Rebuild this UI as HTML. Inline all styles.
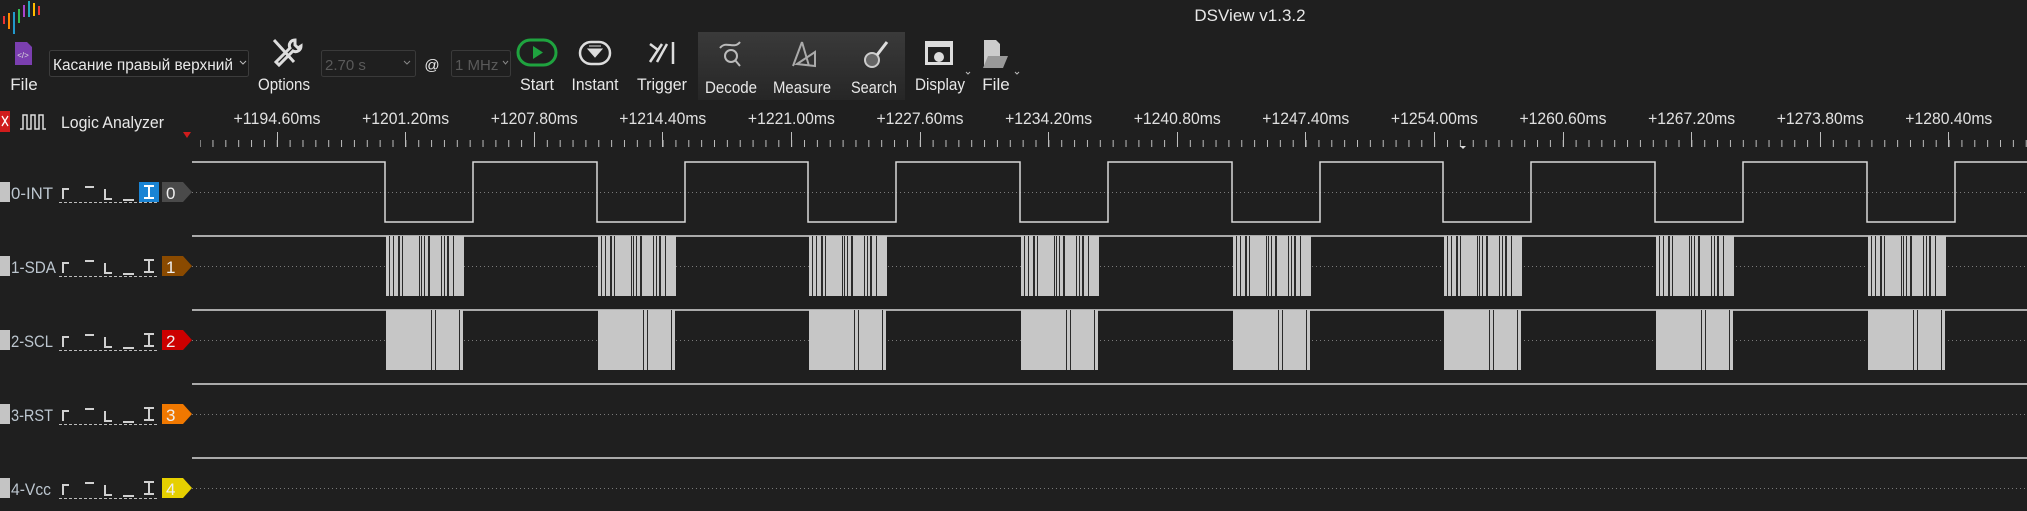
<!DOCTYPE html>
<html><head><meta charset="utf-8"><style>
html,body{margin:0;padding:0;background:#1f1f1f;width:2027px;height:511px;overflow:hidden}
svg{display:block}
text{font-family:"Liberation Sans Narrow","Liberation Sans",sans-serif}
</style></head><body>
<svg width="2027" height="511" viewBox="0 0 2027 511" xmlns="http://www.w3.org/2000/svg">
<defs>
<linearGradient id="grp" x1="0" y1="0" x2="0" y2="1"><stop offset="0" stop-color="#3a3a3a"/><stop offset="1" stop-color="#262626"/></linearGradient>
<pattern id="minor" x="6.7" y="0" width="12.86" height="20" patternUnits="userSpaceOnUse"><rect x="0" y="0" width="1" height="20" fill="#bdbdbd"/></pattern>
<pattern id="dots" x="0" y="0" width="4" height="2" patternUnits="userSpaceOnUse"><rect width="1" height="1" fill="#7a7a7a"/></pattern>
<g id="sda">
<rect x="1" y="0" width="78" height="60" fill="#c6c6c6"/>
<g fill="#2a2a2a"><rect x="4" y="0" width="1" height="60"/><rect x="8" y="0" width="1" height="60"/><rect x="13" y="0" width="2" height="60"/><rect x="17" y="0" width="1" height="60"/><rect x="34" y="0" width="1" height="60"/><rect x="36" y="0" width="1" height="60"/><rect x="39" y="0" width="1" height="60"/><rect x="43" y="0" width="2" height="60"/><rect x="56" y="0" width="1" height="60"/><rect x="59" y="0" width="1" height="60"/><rect x="62" y="0" width="2" height="60"/><rect x="68" y="0" width="1" height="60"/></g>
</g>
<g id="scl">
<rect x="1" y="0" width="77" height="60" fill="#c6c6c6"/>
<g fill="#2a2a2a"><rect x="46" y="0" width="1" height="60"/><rect x="50" y="0" width="1" height="60"/><rect x="74" y="0" width="1" height="60"/></g>
</g>
<g id="trg" stroke="#d0d0d0" stroke-width="2" fill="none">
<path d="M63 7V-3h6"/><path d="M85 -5h9"/><path d="M105 -3v10h7"/><path d="M123 8h11"/>
<path d="M59 10.5H159" stroke="#bbb" stroke-width="1" stroke-dasharray="3 2"/>
</g>
</defs>

<!-- title -->
<g>
<rect x="3" y="16" width="2" height="8" fill="#e33"/><rect x="8" y="13" width="2" height="16" fill="#f80"/><rect x="13" y="12" width="2" height="22" fill="#29c"/><rect x="18" y="9" width="2" height="14" fill="#3b5"/><rect x="23" y="5" width="2" height="12" fill="#a4c"/><rect x="28" y="1" width="2" height="16" fill="#2ab"/><rect x="33" y="3" width="2" height="13" fill="#fb0"/><rect x="38" y="6" width="2" height="9" fill="#e33"/>
</g>
<text x="1250" y="21" font-size="17" fill="#e8e8e8" text-anchor="middle">DSView v1.3.2</text>

<!-- toolbar -->
<rect x="698" y="32" width="207" height="68" fill="url(#grp)"/>
<g font-size="17" fill="#e8e8e8" text-anchor="middle">
<path d="M15 42h12l5 5v18H15z" fill="#7b3fb0"/><text x="23" y="58" font-size="8" fill="#ddd">&lt;/&gt;</text>
<text x="24" y="90">File</text>
<rect x="49.5" y="50.5" width="199" height="26" rx="2" fill="#1b1b1b" stroke="#3c3c3c"/>
<text x="53" y="70" text-anchor="start" font-family="Liberation Sans" font-size="15.5" textLength="180" lengthAdjust="spacingAndGlyphs">Касание правый верхний</text>
<path d="M240 61l3 3 3-3" stroke="#bbb" fill="none"/>
<path d="M274 40l20 22M295 40c-4 0-7 4-5 8l-14 14 3 3 14-14c4 2 8-1 8-5l-3 2-3-3z" stroke="#ddd" stroke-width="3" fill="none"/>
<text x="284" y="90" textLength="52" lengthAdjust="spacingAndGlyphs">Options</text>
<rect x="321.5" y="50.5" width="94" height="26" rx="2" fill="#1f1f1f" stroke="#3a3a3a"/>
<text x="325" y="70" text-anchor="start" fill="#5a5a5a" font-size="15">2.70 s</text>
<path d="M404 61l3 3 3-3" stroke="#888" fill="none"/>
<text x="432" y="70" font-size="15">@</text>
<rect x="451.5" y="50.5" width="59" height="26" rx="2" fill="#1f1f1f" stroke="#3a3a3a"/>
<text x="455" y="70" text-anchor="start" fill="#5a5a5a" font-size="15">1 MHz</text>
<path d="M503 61l2.5 3 2.5-3" stroke="#888" fill="none"/>
<rect x="518" y="40" width="38" height="25" rx="12.5" fill="none" stroke="#1fa33f" stroke-width="3"/>
<path d="M533 46v13l10-6.5z" fill="#1fa33f"/>
<text x="537" y="90" textLength="34" lengthAdjust="spacingAndGlyphs">Start</text>
<rect x="580" y="42" width="30" height="22" rx="11" fill="none" stroke="#ddd" stroke-width="2.5"/>
<path d="M588 49h14l-7 8z M589 46h12" fill="#ddd" stroke="#ddd"/>
<text x="595" y="90" textLength="47" lengthAdjust="spacingAndGlyphs">Instant</text>
<path d="M650 44l8 6M650 62l12-18M657 62l10-18M673 42v22" stroke="#ddd" stroke-width="2.5" fill="none"/>
<text x="662" y="90" textLength="50" lengthAdjust="spacingAndGlyphs">Trigger</text>
<circle cx="731" cy="56" r="6" fill="none" stroke="#bbb" stroke-width="2"/><path d="M735 60l5 6M720 48c6-8 14 2 20-6" stroke="#bbb" stroke-width="2" fill="none"/>
<text x="731" y="93" textLength="52" lengthAdjust="spacingAndGlyphs">Decode</text>
<path d="M802 42l-9 24M802 42l7 24M797 64l18-12v14z" stroke="#aaa" stroke-width="2" fill="none"/>
<text x="802" y="93" textLength="58" lengthAdjust="spacingAndGlyphs">Measure</text>
<circle cx="872" cy="60" r="7" fill="#666" stroke="#ccc" stroke-width="2"/><path d="M877 55l10-13" stroke="#ddd" stroke-width="3"/>
<text x="874" y="93" textLength="46" lengthAdjust="spacingAndGlyphs">Search</text>
<rect x="925" y="41" width="28" height="24" fill="#ddd"/><rect x="928" y="47" width="22" height="15" fill="#222"/><circle cx="939" cy="57" r="5" fill="#ddd"/>
<text x="940" y="90" textLength="50" lengthAdjust="spacingAndGlyphs">Display</text><path d="M966 72l2 2 2-2" stroke="#bbb" fill="none"/>
<path d="M984 40h12l4 4v22h-16z" fill="#ccc"/><path d="M988 56h20l-5 12h-20z" fill="#999"/>
<text x="996" y="90">File</text><path d="M1015 72l2 2 2-2" stroke="#bbb" fill="none"/>
</g>

<!-- ruler header -->
<rect x="0" y="111" width="10" height="21" fill="#d01c1c"/><path d="M2 116l6 10M8 116l-6 10" stroke="#fff" stroke-width="1.3"/>
<path d="M20 129h3v-14h4v14h4v-14h4v14h4v-14h4v14h3" stroke="#ddd" stroke-width="1.5" fill="none"/>
<text x="61" y="128" font-size="17" fill="#e8e8e8" textLength="103" lengthAdjust="spacingAndGlyphs">Logic Analyzer</text>
<path d="M183 132h8l-4 6z" fill="#d01c1c"/>
<g font-size="17" fill="#e0e0e0" text-anchor="middle" textLength="87" lengthAdjust="spacingAndGlyphs">
<text x="277" y="124" textLength="87" lengthAdjust="spacingAndGlyphs">+1194.60ms</text><text x="405.6" y="124" textLength="87" lengthAdjust="spacingAndGlyphs">+1201.20ms</text><text x="534.2" y="124" textLength="87" lengthAdjust="spacingAndGlyphs">+1207.80ms</text><text x="662.8" y="124" textLength="87" lengthAdjust="spacingAndGlyphs">+1214.40ms</text><text x="791.4" y="124" textLength="87" lengthAdjust="spacingAndGlyphs">+1221.00ms</text><text x="920" y="124" textLength="87" lengthAdjust="spacingAndGlyphs">+1227.60ms</text><text x="1048.6" y="124" textLength="87" lengthAdjust="spacingAndGlyphs">+1234.20ms</text><text x="1177.2" y="124" textLength="87" lengthAdjust="spacingAndGlyphs">+1240.80ms</text><text x="1305.8" y="124" textLength="87" lengthAdjust="spacingAndGlyphs">+1247.40ms</text><text x="1434.4" y="124" textLength="87" lengthAdjust="spacingAndGlyphs">+1254.00ms</text><text x="1563" y="124" textLength="87" lengthAdjust="spacingAndGlyphs">+1260.60ms</text><text x="1691.6" y="124" textLength="87" lengthAdjust="spacingAndGlyphs">+1267.20ms</text><text x="1820.2" y="124" textLength="87" lengthAdjust="spacingAndGlyphs">+1273.80ms</text><text x="1948.8" y="124" textLength="87" lengthAdjust="spacingAndGlyphs">+1280.40ms</text>
</g>
<rect x="200" y="140" width="1827" height="7" fill="url(#minor)"/>
<g fill="#bdbdbd"><rect x="277" y="132" width="1" height="15"/><rect x="405" y="132" width="1" height="15"/><rect x="534" y="132" width="1" height="15"/><rect x="662" y="132" width="1" height="15"/><rect x="791" y="132" width="1" height="15"/><rect x="920" y="132" width="1" height="15"/><rect x="1048" y="132" width="1" height="15"/><rect x="1177" y="132" width="1" height="15"/><rect x="1305" y="132" width="1" height="15"/><rect x="1434" y="132" width="1" height="15"/><rect x="1563" y="132" width="1" height="15"/><rect x="1691" y="132" width="1" height="15"/><rect x="1820" y="132" width="1" height="15"/><rect x="1948" y="132" width="1" height="15"/></g>
<path d="M1460 146l3 3 3-3z" fill="#ddd"/>

<!-- dotted center lines -->
<g fill="url(#dots)"><rect x="192" y="192" width="1835" height="1"/><rect x="192" y="266" width="1835" height="1"/><rect x="192" y="340" width="1835" height="1"/><rect x="192" y="414" width="1835" height="1"/><rect x="192" y="488" width="1835" height="1"/></g>

<!-- channel labels -->
<g font-size="17" fill="#bcc6cf">
<rect x="0" y="182" width="10" height="20" fill="#c4c4c4"/><text x="11" y="199" textLength="42" lengthAdjust="spacingAndGlyphs">0-INT</text><use href="#trg" y="192"/><rect x="139" y="182" width="20" height="20" fill="#1a84d4"/><path d="M144 186h10M144 198h10M149 186v12" stroke="#fff" stroke-width="2"/><path d="M162 182h21l9 10-9 10h-21z" fill="#4a4a4a"/><text x="166" y="199" fill="#eee">0</text>
<rect x="0" y="256" width="10" height="20" fill="#c4c4c4"/><text x="11" y="273" textLength="45" lengthAdjust="spacingAndGlyphs">1-SDA</text><use href="#trg" y="266"/><path d="M144 260h10M144 272h10M149 260v12" stroke="#d0d0d0" stroke-width="2"/><path d="M162 256h21l9 10-9 10h-21z" fill="#8a4a00"/><text x="166" y="273" fill="#eee">1</text>
<rect x="0" y="330" width="10" height="20" fill="#c4c4c4"/><text x="11" y="347" textLength="42" lengthAdjust="spacingAndGlyphs">2-SCL</text><use href="#trg" y="340"/><path d="M144 334h10M144 346h10M149 334v12" stroke="#d0d0d0" stroke-width="2"/><path d="M162 330h21l9 10-9 10h-21z" fill="#cc0000"/><text x="166" y="347" fill="#eee">2</text>
<rect x="0" y="404" width="10" height="20" fill="#c4c4c4"/><text x="11" y="421" textLength="42" lengthAdjust="spacingAndGlyphs">3-RST</text><use href="#trg" y="414"/><path d="M144 408h10M144 420h10M149 408v12" stroke="#d0d0d0" stroke-width="2"/><path d="M162 404h21l9 10-9 10h-21z" fill="#f07800"/><text x="166" y="421" fill="#eee">3</text>
<rect x="0" y="478" width="10" height="20" fill="#c4c4c4"/><text x="11" y="495" textLength="40" lengthAdjust="spacingAndGlyphs">4-Vcc</text><use href="#trg" y="488"/><path d="M144 482h10M144 494h10M149 482v12" stroke="#d0d0d0" stroke-width="2"/><path d="M162 478h21l9 10-9 10h-21z" fill="#e6d000"/><text x="166" y="495" fill="#eee">4</text>
</g>

<!-- waveforms -->
<g stroke="#d8d8d8" stroke-width="1.5" fill="none">
<path d="M192 162H385V222H473V162H597V222H685V162H808V222H896V162H1020V222H1108V162H1232V222H1320V162H1443V222H1531V162H1655V222H1743V162H1867V222H1955V162H2027"/>
<path d="M192 236H2027"/>
<path d="M192 310H2027"/>
<path d="M192 384H2027"/>
<path d="M192 458H2027"/>
</g>
<g>
<use href="#sda" x="385" y="236"/><use href="#sda" x="597" y="236"/><use href="#sda" x="808" y="236"/><use href="#sda" x="1020" y="236"/><use href="#sda" x="1232" y="236"/><use href="#sda" x="1443" y="236"/><use href="#sda" x="1655" y="236"/><use href="#sda" x="1867" y="236"/>
<use href="#scl" x="385" y="310"/><use href="#scl" x="597" y="310"/><use href="#scl" x="808" y="310"/><use href="#scl" x="1020" y="310"/><use href="#scl" x="1232" y="310"/><use href="#scl" x="1443" y="310"/><use href="#scl" x="1655" y="310"/><use href="#scl" x="1867" y="310"/>
</g>
</svg>
</body></html>
